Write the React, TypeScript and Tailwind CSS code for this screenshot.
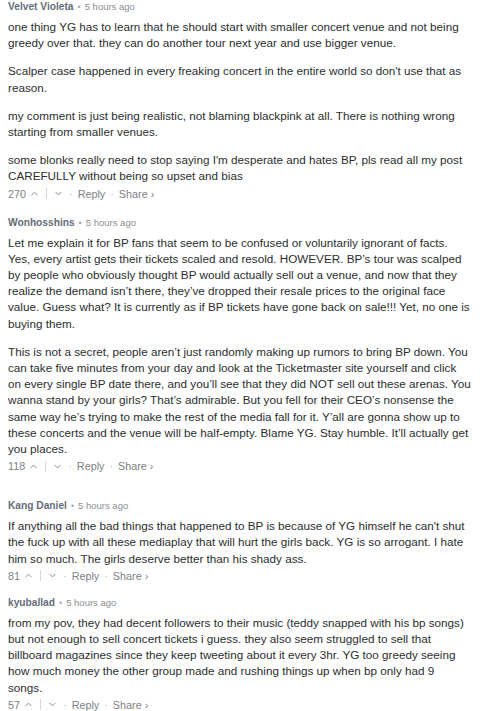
import { ChevronUp, ChevronDown } from "lucide-react";

type Comment = {
  author: string;
  time: string;
  paragraphs: string[];
  votes: number;
  gap: string;
  body?: string;
};

const comments: Comment[] = [
  {
    author: "Velvet Violeta",
    time: "5 hours ago",
    votes: 270,
    gap: "mb-[14px]",
    paragraphs: [
      "one thing YG has to learn that he should start with smaller concert venue and not being greedy over that. they can do another tour next year and use bigger venue.",
      "Scalper case happened in every freaking concert in the entire world so don't use that as reason.",
      "my comment is just being realistic, not blaming blackpink at all. There is nothing wrong starting from smaller venues.",
      "some blonks really need to stop saying I'm desperate and hates BP, pls read all my post CAREFULLY without being so upset and bias",
    ],
  },
  {
    author: "Wonhosshins",
    time: "5 hours ago",
    votes: 118,
    gap: "mb-[25px]",
    paragraphs: [
      "Let me explain it for BP fans that seem to be confused or voluntarily ignorant of facts. Yes, every artist gets their tickets scaled and resold. HOWEVER. BP’s tour was scalped by people who obviously thought BP would actually sell out a venue, and now that they realize the demand isn’t there, they’ve dropped their resale prices to the original face value. Guess what? It is currently as if BP tickets have gone back on sale!!! Yet, no one is buying them.",
      "This is not a secret, people aren’t just randomly making up rumors to bring BP down. You can take five minutes from your day and look at the Ticketmaster site yourself and click on every single BP date there, and you’ll see that they did NOT sell out these arenas. You wanna stand by your girls? That’s admirable. But you fell for their CEO’s nonsense the same way he’s trying to make the rest of the media fall for it. Y’all are gonna show up to these concerts and the venue will be half-empty. Blame YG. Stay humble. It’ll actually get you places.",
    ],
  },
  {
    author: "Kang Daniel",
    time: "5 hours ago",
    votes: 81,
    gap: "mb-[12px]",
    paragraphs: [
      "If anything all the bad things that happened to BP is because of YG himself he can't shut the fuck up with all these mediaplay that will hurt the girls back. YG is so arrogant. I hate him so much. The girls deserve better than his shady ass.",
    ],
  },
  {
    author: "kyuballad",
    time: "5 hours ago",
    votes: 57,
    gap: "mb-0",
    body: "pr-1",
    paragraphs: [
      "from my pov, they had decent followers to their music (teddy snapped with his bp songs) but not enough to sell concert tickets i guess. they also seem struggled to sell that billboard magazines since they keep tweeting about it every 3hr. YG too greedy seeing how much money the other group made and rushing things up when bp only had 9 songs.",
    ],
  },
];

const Dot = () => <span className="mx-[5px] text-[#b4b8bc]">·</span>;

export default function App() {
  return (
    <div className="w-[480px] h-[711px] overflow-hidden bg-white px-2 font-['Liberation_Sans',Arial,sans-serif]">
      {comments.map((c) => (
        <div key={c.author} className={c.gap}>
          {/* Header */}
          <div className="flex items-baseline h-[14px] leading-[14px]">
            <span className="text-[10.2px] font-bold text-[#656c7a]">{c.author}</span>
            <span className="mx-[4px] text-[9px] text-[#a5a9ad]">•</span>
            <span className="text-[9.5px] text-[#8a8e92]">{c.time}</span>
          </div>

          {/* Body */}
          <div className={`mt-[5px] text-[11.7px] leading-[16.2px] text-[#2a2e2e] ${c.body ?? ""}`}>
            {c.paragraphs.map((p, i) => (
              <p key={i} className={i < c.paragraphs.length - 1 ? "mb-[12px]" : ""}>
                {p}
              </p>
            ))}
          </div>

          {/* Actions */}
          <div className="mt-[1px] flex items-center h-[16px] text-[10.8px] text-[#7b8185]">
            <span>{c.votes}</span>
            <ChevronUp className="ml-[3px] w-[11px] h-[11px]" strokeWidth={2} />
            <span className="mx-[6px] h-[11px] w-px bg-[#d5d8da]" />
            <ChevronDown className="w-[11px] h-[11px]" strokeWidth={2} />
            <Dot />
            <span>Reply</span>
            <Dot />
            <span>Share ›</span>
          </div>
        </div>
      ))}
    </div>
  );
}
